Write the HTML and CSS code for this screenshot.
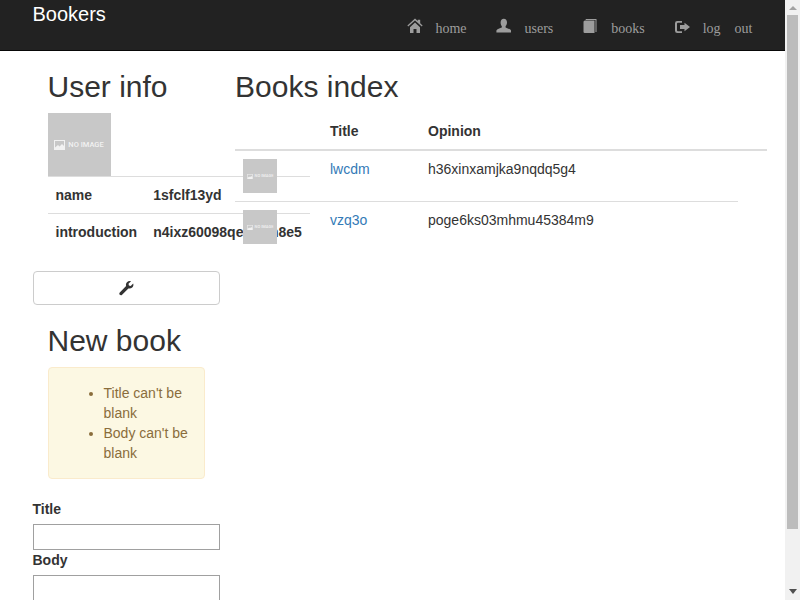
FILE: index.html
```html
<!DOCTYPE html>
<html lang="en">
<head>
<meta charset="utf-8">
<title>Bookers</title>
<link rel="stylesheet" href="styles.css">
</head>
<body>
<header class="navbar">
  <div class="navbar-inner">
    <a class="brand" href="#">Bookers</a>
    <ul class="nav">
      <li><a href="#"><svg class="icon" viewBox="0 0 16 16"><path d="M8 .4 10.800 3V1.800h2.400v3.500l2.400 2.300-.8.900L8 2.400 1.200 8.500.4 7.600zM3 9.300 8 4.600l5 4.700V15H9.500v-4h-3v4H3z"/></svg>home</a></li>
      <li><a href="#"><svg class="icon" viewBox="0 0 16 16"><path d="M7.800 .8c2 0 3.200 1.500 3.200 3.600 0 1.500-.6 2.900-1.400 3.700v1.300c1.800.8 4.900 1.600 5.400 3.100v2H.4v-2c.5-1.500 3.600-2.300 5.400-3.100V8.100C5 7.300 4.600 5.900 4.600 4.400 4.600 2.300 5.800 .8 7.800 .8z"/></svg>users</a></li>
      <li><a href="#"><svg class="icon" viewBox="0 0 16 16"><path d="M.5 3.600 1.700 2.400h9.800V15H1.700A1.200 1.200 0 0 1 .5 13.800zM2.700 1h10.800v13h-1V2H2.700z"/></svg>books</a></li>
      <li><a href="#"><svg class="icon" viewBox="0 0 16 16"><path d="M0 5.300a2.300 2.300 0 0 1 2.300-2.300H7v1.800H3a1 1 0 0 0-1 1v6.400a1 1 0 0 0 1 1h4V15H2.300A2.300 2.300 0 0 1 0 12.700zM9.500 4.800 15 9l-5.500 4.200V11H5V7h4.500z"/></svg>log out</a></li>
    </ul>
  </div>
</header>
<main class="container">
  <aside class="side">
    <div class="pad">
      <h2>User info</h2>
      <div class="noimage noimage-lg">
        <svg class="pic" viewBox="0 0 11 10"><path d="M0 0h11v10H0z" fill="#f2f2f2"/><path d="M1 1h9v5L8 4 5.500 6.500 4 5 1 7.500z" fill="#c8c8c8"/></svg>
        <span>NO IMAGE</span>
      </div>
      <table class="info">
        <tr><th>name</th><th class="val">1sfclf13yd</th></tr>
        <tr><th>introduction</th><th class="val">n4ixz60098qe0kwn8e5</th></tr>
      </table>
    </div>
    <button class="edit" type="button" aria-label="edit"><svg class="wrench" viewBox="0 0 16 16"><path d="M15.200 3.400c.5 1.500.1 3.100-1 4.100-1.100 1-2.500 1.300-3.800.9L4.100 14.700a1.600 1.600 0 0 1-2.800-1.200c0-.4.200-.8.500-1.100L8.100 6.100c-.4-1.300-.1-2.800.9-3.800 1-1.100 2.600-1.500 4-1L10.500 3.800l.4 1.800 1.800.400z"/></svg></button>
    <div class="pad">
      <h2>New book</h2>
      <div class="alert">
        <ul>
          <li>Title can't be blank</li>
          <li>Body can't be blank</li>
        </ul>
      </div>
    </div>
    <form class="form">
      <label for="t">Title</label>
      <input id="t" type="text">
      <label for="b">Body</label>
      <textarea id="b"></textarea>
    </form>
  </aside>
  <section class="books">
    <h2>Books index</h2>
    <table class="list">
      <colgroup><col class="c1"><col class="c2"><col class="c3"><col class="c4"></colgroup>
      <thead><tr><th></th><th>Title</th><th>Opinion</th><th></th></tr></thead>
      <tbody>
        <tr><td><div class="noimage noimage-sm"><svg class="pic" viewBox="0 0 11 10"><path d="M0 0h11v10H0z" fill="#f2f2f2"/><path d="M1 1h9v5L8 4 5.500 6.500 4 5 1 7.500z" fill="#c8c8c8"/></svg><span>NO IMAGE</span></div></td><td><a href="#">lwcdm</a></td><td>h36xinxamjka9nqdq5g4</td></tr>
        <tr><td><div class="noimage noimage-sm"><svg class="pic" viewBox="0 0 11 10"><path d="M0 0h11v10H0z" fill="#f2f2f2"/><path d="M1 1h9v5L8 4 5.500 6.500 4 5 1 7.500z" fill="#c8c8c8"/></svg><span>NO IMAGE</span></div></td><td><a href="#">vzq3o</a></td><td>poge6ks03mhmu45384m9</td></tr>
      </tbody>
    </table>
  </section>
</main>
<div class="scrollbar" aria-hidden="true">
  <div class="arrow arrow-up"></div>
  <div class="thumb"></div>
  <div class="arrow arrow-down"></div>
</div>
</body>
</html>
```
FILE: styles.css
```css
* { box-sizing: border-box; }
body {
  width: 785px;
  margin: 0;
  font-family: "Liberation Sans", Arial, sans-serif;
  font-size: 14px;
  line-height: 20px;
  color: #333;
  background: #fff;
}
.navbar {
  height: 51px;
  background: #222;
  border-bottom: 1px solid #080808;
}
.navbar-inner {
  width: 750px;
  margin-left: 32.5px;
  display: flex;
  justify-content: space-between;
  align-items: flex-start;
}
.brand {
  margin-top: 4px;
  font-size: 20px;
  color: #fff;
  text-decoration: none;
}
.nav {
  display: flex;
  margin: 0;
  padding: 0 15px 0 0;
  list-style: none;
  font-family: "Liberation Serif", "Times New Roman", serif;
}
.nav a {
  display: flex;
  align-items: center;
  height: 50px;
  padding: 8px 15px 0;
  color: #9d9d9d;
  text-decoration: none;
  word-spacing: 10.500px;
}
.icon {
  width: 16px;
  height: 16px;
  margin-right: 12px;
  margin-top: -6px;
  fill: #9d9d9d;
}
.container {
  width: 750px;
  margin-left: 32.5px;
  display: flex;
  align-items: flex-start;
}
.side { width: 187.5px; flex: none; }
.pad { padding: 0 15px; }
.books { width: 562.5px; flex: none; padding: 0 15px; }
h2 {
  margin: 19px 0 10px;
  font-size: 30px;
  font-weight: 500;
  line-height: 33px;
}
.noimage {
  display: flex;
  align-items: center;
  justify-content: center;
  background: #c8c8c8;
  color: #f2f2f2;
  font-family: Roboto, "Liberation Sans", sans-serif;
  font-weight: 500;
  white-space: nowrap;
}
.noimage-lg { width: 63px; height: 63px; gap: 3px; font-size: 7.500px; }
.noimage-lg .pic { width: 11px; height: 10px; }
.noimage-sm { width: 34px; height: 34px; gap: 2px; font-size: 4px; }
.noimage-sm .pic { width: 6px; height: 5px; }
table { border-collapse: collapse; border-spacing: 0; }
.info { width: 100%; }
.info th {
  padding: 8px;
  text-align: left;
  border-top: 1px solid #ddd;
  vertical-align: top;
}
.edit {
  display: flex;
  align-items: center;
  justify-content: center;
  width: 187.5px;
  height: 34px;
  margin-top: 21px;
  padding: 0;
  background: #fff;
  border: 1px solid #ccc;
  border-radius: 4px;
}
.wrench { width: 16px; height: 16px; fill: #333; }
.alert {
  margin-bottom: 20px;
  padding: 15px;
  color: #8a6d3b;
  background: #fcf8e3;
  border: 1px solid #faebcc;
  border-radius: 4px;
}
.alert ul { margin: 0; padding-left: 40px; }
.form { display: flex; flex-direction: column; align-items: flex-start; padding-bottom: 16px; }
label { font-weight: 700; margin-bottom: 5px; }
input, textarea {
  display: block;
  width: 187.5px;
  margin: 0;
  background: #fff;
  border: 1px solid #a0a0a0;
  border-radius: 0;
  padding: 1px 2px;
}
input { height: 26px; }
textarea { height: 74px; resize: none; }
.list { width: 532px; table-layout: fixed; }
.c1 { width: 87px; }
.c2 { width: 98px; }
.c3 { width: 318px; }
.list th {
  padding: 8px;
  text-align: left;
  font-weight: 700;
  border-bottom: 2px solid #ddd;
}
.list td {
  padding: 8px;
  vertical-align: top;
  border-top: 1px solid #ddd;
}
.list td a { color: #337ab7; text-decoration: none; }
.scrollbar {
  position: fixed;
  top: 0;
  right: 0;
  bottom: 0;
  width: 15px;
  display: flex;
  flex-direction: column;
  align-items: center;
  background: #f1f1f1;
}
.arrow { flex: none; width: 0; height: 0; border-left: 4px solid transparent; border-right: 4px solid transparent; }
.arrow-up { margin: 6px 0 5px; border-bottom: 4px solid #a3a3a3; }
.thumb { flex: none; width: 11px; height: 514px; background: #bcbcbc; }
.arrow-down { margin-top: 60px; border-top: 5px solid #505050; }
```
